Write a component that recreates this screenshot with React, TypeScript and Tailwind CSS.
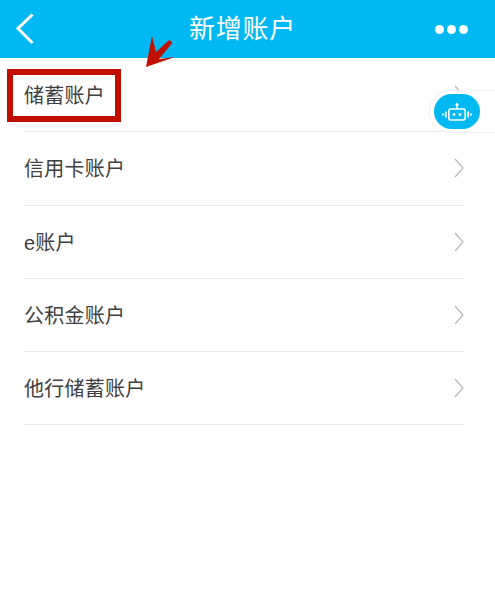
import React from 'react';

const rows = ['储蓄账户', '信用卡账户', 'e账户', '公积金账户', '他行储蓄账户'];

const Chevron = () => (
  <svg width="10" height="20" viewBox="0 0 10 20" fill="none" stroke="#b8b8b8" strokeWidth="1.2" className="shrink-0">
    <path d="M1 1 L9 10 L1 19" />
  </svg>
);

const RobotIcon = () => (
  <svg width="30" height="18" viewBox="0 0 30 18" fill="none" stroke="white" strokeWidth="1.6">
    <circle cx="15" cy="1.6" r="1.6" fill="white" stroke="none" />
    <path d="M15 2 V6" />
    <rect x="6.8" y="6" width="16.4" height="11" rx="2" />
    <circle cx="12" cy="11.5" r="1.4" fill="white" stroke="none" />
    <circle cx="18" cy="11.5" r="1.4" fill="white" stroke="none" />
    <path d="M3.8 8.5 V14.5 M26.2 8.5 V14.5" strokeWidth="1.8" />
    <path d="M1 10.5 V12.5 M29 10.5 V12.5" strokeWidth="1.8" />
  </svg>
);

export default function App() {
  return (
    <div className="relative h-[594px] w-[495px] overflow-hidden bg-white" style={{ fontFamily: '"Liberation Sans", "Noto Sans CJK SC", sans-serif' }}>
      {/* Header */}
      <div className="flex h-[58px] items-center justify-between bg-[#00b9f2] pl-[16px] pr-[27px] text-white">
        <svg width="18" height="32" viewBox="0 0 18 32" fill="none" stroke="white" strokeWidth="3">
          <path d="M16.5 1.5 L2 15.5 L16.5 30" />
        </svg>
        <h1 className="ml-[16px] text-[26px] font-normal tracking-[0.7px]">新增账户</h1>
        <div className="flex gap-[3px]">
          <span className="h-[9px] w-[9px] rounded-full bg-white" />
          <span className="h-[9px] w-[9px] rounded-full bg-white" />
          <span className="h-[9px] w-[9px] rounded-full bg-white" />
        </div>
      </div>

      {/* List */}
      <div className="mx-[24px] w-[440px] pt-[1px]">
        {rows.map((label) => (
          <div key={label} className="flex h-[73.3px] items-center justify-between border-b-[1.5px] border-[#e8e8e8] text-[20px] tracking-[0.25px] text-[#404040]">
            <span className="pt-[2px]">{label}</span>
            <Chevron />
          </div>
        ))}
      </div>

      {/* Red annotation box */}
      <div className="absolute left-[7px] top-[69px] h-[53px] w-[114px] border-[6px] border-[#c00f00]" />

      {/* Red arrow */}
      <svg className="absolute left-[144px] top-[36px]" width="32" height="32" viewBox="0 0 32 32">
        <path d="M8 0 L12 16 L24 5 C26 3.5 29 6 27.5 8 L15 23 L31 21 L2 31 Z" fill="#c01000" />
      </svg>

      {/* Robot floating button */}
      <div className="absolute left-[429px] top-[90px] flex h-[43px] w-[66px] items-center rounded-l-[21px] border border-r-0 border-[#f0f0f0] bg-white pl-[4px]">
        <div className="flex h-[35px] w-[46px] items-center justify-center rounded-[18px] bg-[#00b9f2]">
          <RobotIcon />
        </div>
      </div>
    </div>
  );
}
